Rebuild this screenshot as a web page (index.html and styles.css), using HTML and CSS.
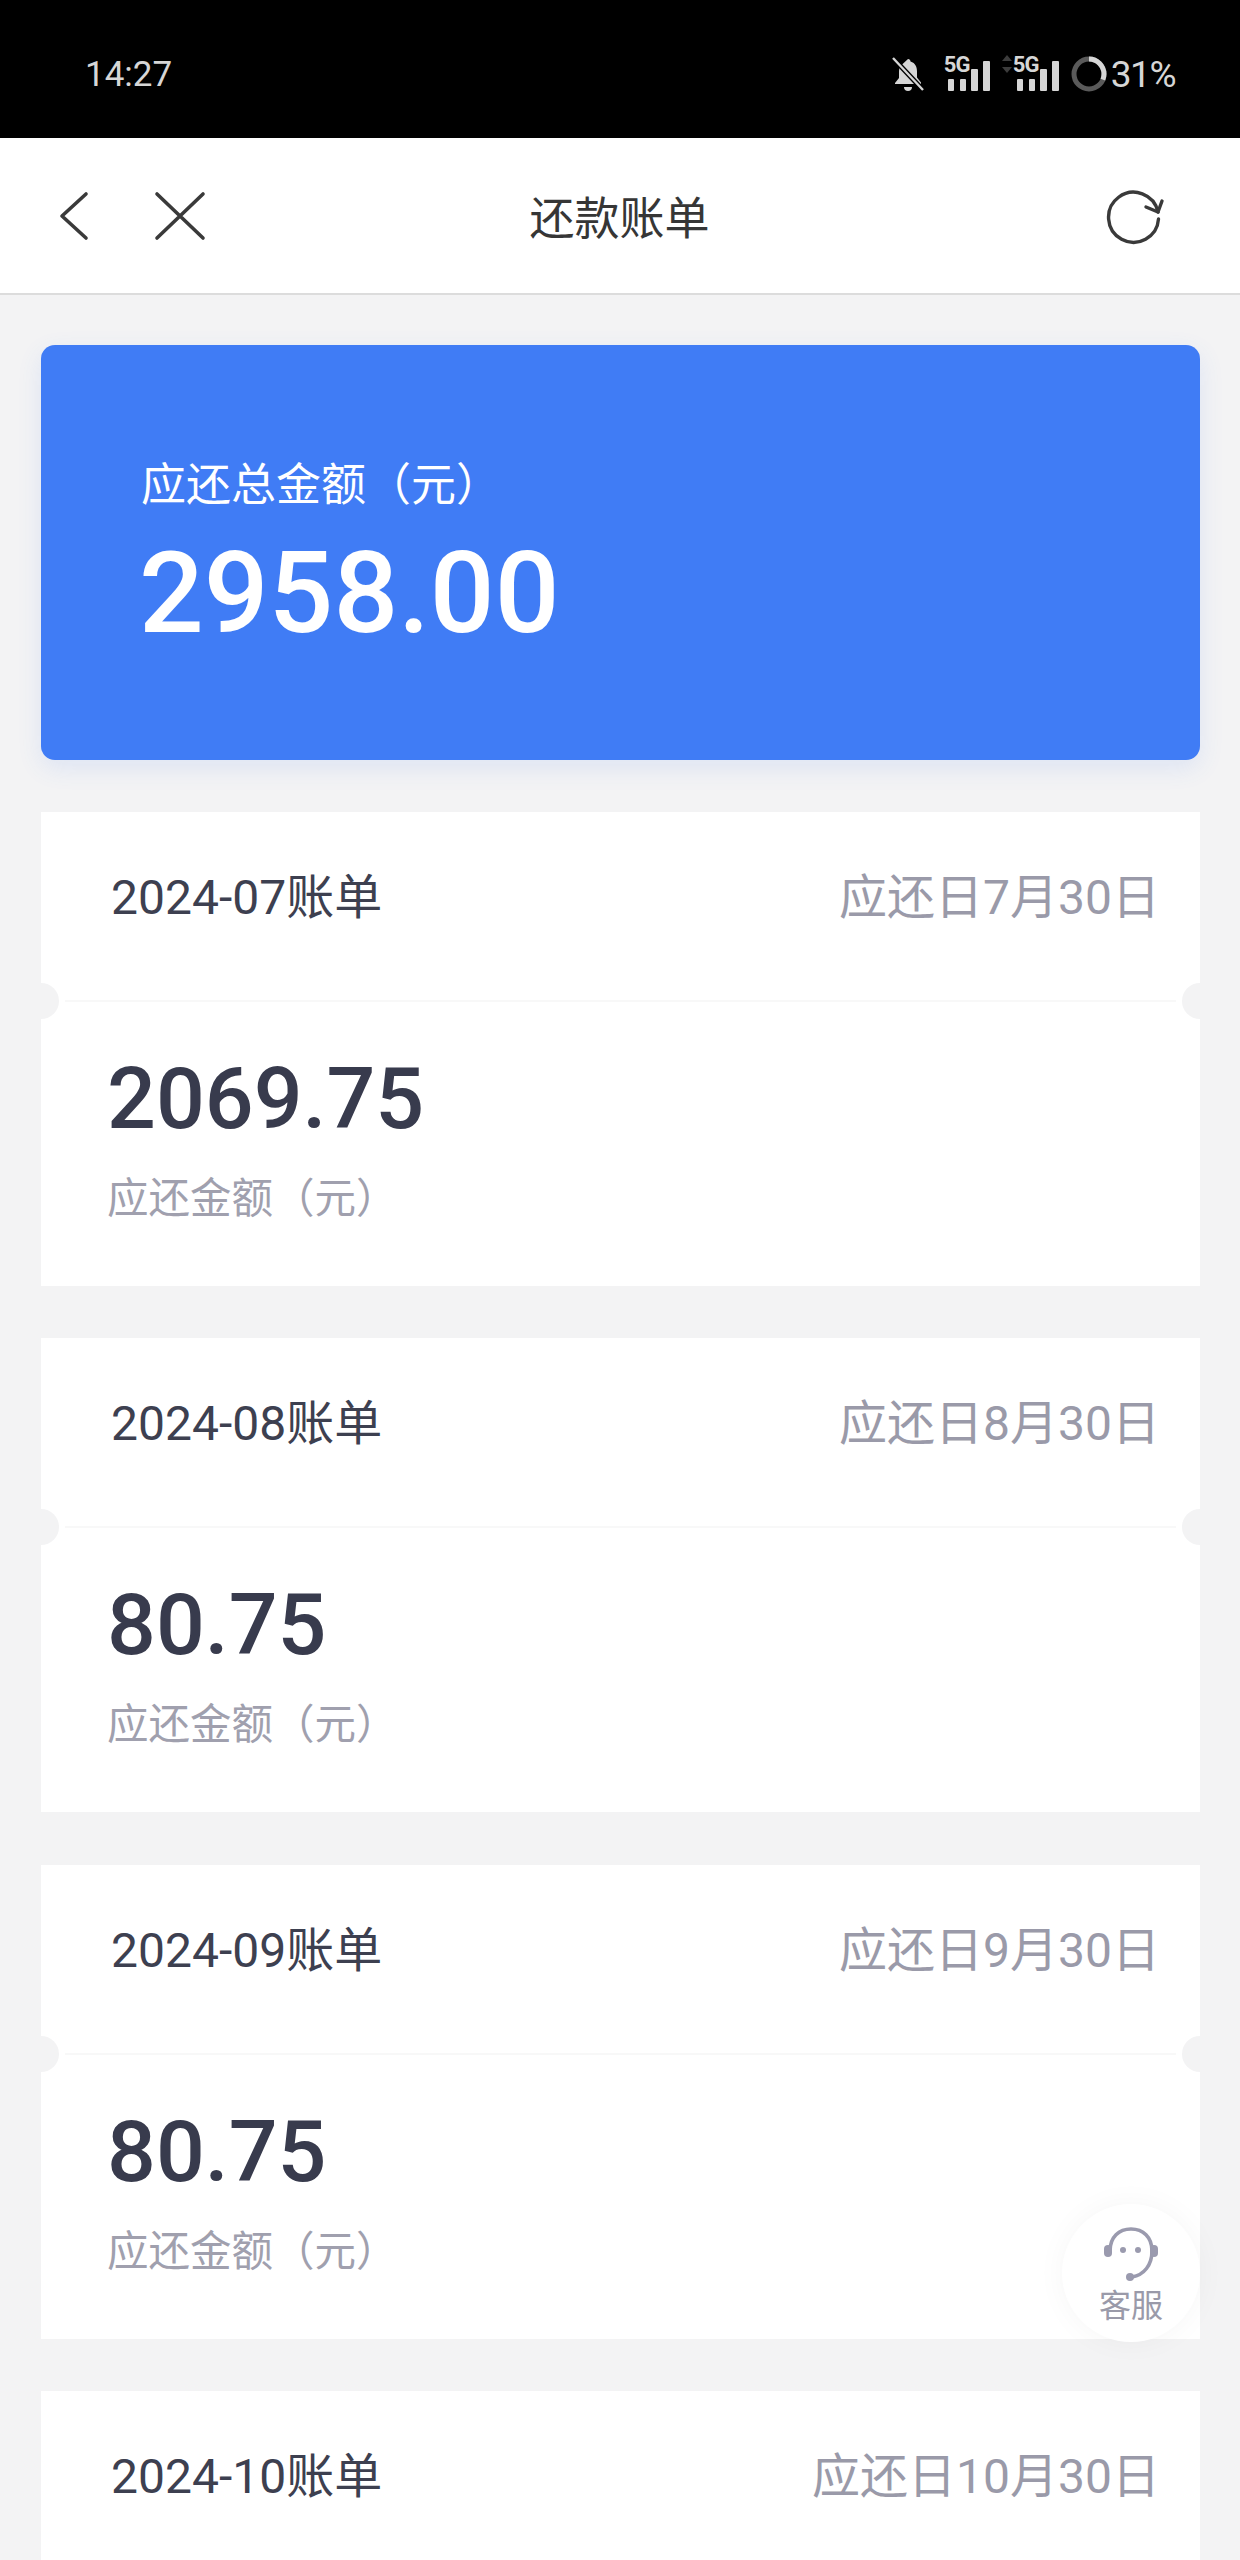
FILE: index.html
```html
<!DOCTYPE html>
<html lang="zh-CN">
<head>
    <meta charset="UTF-8">
    <meta name="viewport" content="width=device-width, initial-scale=1.0">
    <title>还款账单</title>
    <link rel="stylesheet" href="styles.css">
</head>
<body>
    <div class="status-bar">
        <span class="status-time">14:27</span>
        <div class="status-icons">
            <svg class="icon-bell" viewBox="0 0 34 36" width="34" height="36">
                <path d="M17 3c1.500 0 2.500 1 2.500 2.500 5 1.500 6.500 5.500 6.500 10v6l4 5v1.500H4V27l4-5v-6.500c0-2 .5-4 1.500-5.500z" fill="#d6d6d6"/>
                <path d="M13 31h8c0 2.500-1.500 4-4 4s-4-1.500-4-4z" fill="#d6d6d6"/>
                <path d="M2 2l30 32" stroke="#000" stroke-width="5"/>
                <path d="M2 2l30 32" stroke="#d6d6d6" stroke-width="2.400"/>
            </svg>
            <div class="signal">
                <span class="signal-text">5G</span>
                <i class="bar bar-low"></i>
                <i class="bar bar-low"></i>
                <i class="bar bar-mid"></i>
                <i class="bar bar-high"></i>
            </div>
            <svg class="icon-arrows" viewBox="0 0 12 20" width="12" height="20">
                <path d="M6 1l5 6H1z" fill="#3c3c3c"/>
                <path d="M6 19l5-6H1z" fill="#3c3c3c"/>
            </svg>
            <div class="signal">
                <span class="signal-text">5G</span>
                <i class="bar bar-low"></i>
                <i class="bar bar-low"></i>
                <i class="bar bar-mid"></i>
                <i class="bar bar-high"></i>
            </div>
            <svg class="icon-battery" viewBox="0 0 36 36" width="36" height="36">
                <circle cx="18" cy="18" r="15" fill="none" stroke="#5a5a5a" stroke-width="5"/>
                <circle cx="18" cy="18" r="15" fill="none" stroke="#d6d6d6" stroke-width="5" stroke-dasharray="29.200 94.200" transform="rotate(-90 18 18)"/>
            </svg>
            <span class="status-battery">31%</span>
        </div>
    </div>

    <div class="nav-bar">
        <svg class="nav-back" viewBox="0 0 30 50" width="30" height="50" fill="none" stroke="#3a3a3a" stroke-width="3.600" stroke-linecap="round" stroke-linejoin="round">
            <path d="M27 3L3 25l24 22"/>
        </svg>
        <svg class="nav-close" viewBox="0 0 52 50" width="52" height="50" fill="none" stroke="#3a3a3a" stroke-width="3.600" stroke-linecap="round">
            <path d="M3 3l46 44M49 3L3 47"/>
        </svg>
        <span class="nav-title">还款账单</span>
        <svg class="nav-refresh" viewBox="0 0 60 60" width="60" height="60" fill="none" stroke="#3a3a3a" stroke-width="3.400" stroke-linecap="round" stroke-linejoin="round">
            <path d="M53.500 34A25 25 0 1 1 53 27"/>
            <path d="M41 22l12 5 4-11"/>
        </svg>
    </div>

    <div class="content">
        <div class="total-card">
            <div class="total-label">应还总金额（元）</div>
            <div class="total-amount">2958.00</div>
        </div>

        <div class="bill-card">
            <div class="bill-head">
                <span class="bill-month">2024-07账单</span>
                <span class="bill-due">应还日7月30日</span>
            </div>
            <div class="bill-divider"></div>
            <div class="bill-body">
                <div class="bill-amount">2069.75</div>
                <div class="bill-label">应还金额（元）</div>
            </div>
        </div>

        <div class="bill-card">
            <div class="bill-head">
                <span class="bill-month">2024-08账单</span>
                <span class="bill-due">应还日8月30日</span>
            </div>
            <div class="bill-divider"></div>
            <div class="bill-body">
                <div class="bill-amount">80.75</div>
                <div class="bill-label">应还金额（元）</div>
            </div>
        </div>

        <div class="bill-card">
            <div class="bill-head">
                <span class="bill-month">2024-09账单</span>
                <span class="bill-due">应还日9月30日</span>
            </div>
            <div class="bill-divider"></div>
            <div class="bill-body">
                <div class="bill-amount">80.75</div>
                <div class="bill-label">应还金额（元）</div>
            </div>
        </div>

        <div class="bill-card">
            <div class="bill-head">
                <span class="bill-month">2024-10账单</span>
                <span class="bill-due">应还日10月30日</span>
            </div>
        </div>
    </div>

    <div class="service-btn">
        <svg viewBox="0 0 60 60" width="60" height="60">
            <path d="M9 28C9 14 18 6 30 6s21 8 21 22c0 14-8 24-20 26" fill="none" stroke="#9a9aae" stroke-width="3.600"/>
            <rect x="3" y="22" width="8" height="12" rx="4" fill="#9a9aae"/>
            <rect x="49" y="22" width="8" height="12" rx="4" fill="#9a9aae"/>
            <circle cx="22" cy="27" r="3" fill="#9a9aae"/>
            <circle cx="37" cy="27" r="3" fill="#9a9aae"/>
            <circle cx="29" cy="54" r="4" fill="#9a9aae"/>
        </svg>
        <span class="service-text">客服</span>
    </div>
</body>
</html>
```

FILE: styles.css
```css
* {
    box-sizing: border-box;
}

html, body {
    height: 2560px;
}

body {
    margin: 0;
    position: relative;
    overflow: hidden;
    background-color: #f3f3f4;
    font-family: 'Roboto', 'Noto Sans CJK SC', sans-serif;
    color: #383b4d;
}

.status-bar {
    height: 138px;
    background-color: #000;
    color: #d6d6d6;
    display: flex;
    align-items: center;
    justify-content: space-between;
    padding: 10px 65px 0 85px;
}

.status-time {
    font-size: 35px;
}

.status-icons {
    display: flex;
    align-items: center;
}

.status-battery {
    font-size: 37px;
    letter-spacing: -1.500px;
    margin-left: 4px;
}

.icon-bell {
    margin-right: 21px;
}

.signal {
    width: 46px;
    height: 42px;
    display: flex;
    align-items: flex-end;
    justify-content: space-between;
    padding: 0 2px 6px;
    position: relative;
    margin-top: 4px;
}

.bar {
    width: 6.500px;
    background-color: #d6d6d6;
    border-radius: 1px;
}

.bar-low {
    height: 12px;
}

.bar-mid {
    height: 22px;
}

.bar-high {
    height: 30px;
}

.signal-text {
    position: absolute;
    left: -2px;
    top: -2px;
    font-size: 22px;
    font-weight: 700;
    line-height: 24px;
    letter-spacing: -1px;
}

.icon-arrows {
    margin: 0 2px 0 9px;
    position: relative;
    top: -10px;
}

.icon-battery {
    margin-left: 10px;
}

.nav-bar {
    height: 157px;
    background-color: #fff;
    border-bottom: 2px solid #dcdcdc;
    display: flex;
    align-items: center;
    position: relative;
    padding: 0 75px 0 59px;
}

.nav-close {
    margin-left: 65px;
}

.nav-title {
    flex: 1;
    text-align: center;
    font-size: 45px;
    color: #363636;
    padding-right: 72px;
}

.nav-refresh {
    margin-top: -2px;
}

.content {
    padding: 50px 40px 0 41px;
    display: flex;
    flex-direction: column;
    gap: 52.500px;
}

.total-card {
    height: 415px;
    background-color: #407cf5;
    border-radius: 14px;
    box-shadow: 0 8px 24px rgba(64, 124, 245, 0.12);
    color: #fff;
    padding: 109px 0 0 100px;
    margin-bottom: -1px;
}

.total-label {
    font-size: 45px;
    line-height: 64px;
}

.total-amount {
    font-size: 114px;
    font-weight: 500;
    line-height: 130px;
    margin: 10px 0 0 -2px;
}

.bill-card {
    background-color: #fff;
    flex-shrink: 0;
}

.bill-head {
    height: 188px;
    display: flex;
    align-items: center;
    justify-content: space-between;
    padding: 0 40px 26px 70px;
}

.bill-month {
    font-size: 48px;
    color: #3d4050;
}

.bill-due {
    font-size: 48px;
    color: #9a9aa9;
}

.bill-divider {
    height: 2px;
    margin: 0 24px;
    background-color: #f8f8f8;
    position: relative;
}

.bill-divider::before,
.bill-divider::after {
    content: "";
    position: absolute;
    top: -17px;
    width: 18px;
    height: 36px;
    background-color: #f3f3f4;
}

.bill-divider::before {
    left: -24px;
    border-radius: 0 18px 18px 0;
}

.bill-divider::after {
    right: -24px;
    border-radius: 18px 0 0 18px;
}

.bill-body {
    height: 284px;
    padding: 47px 0 0 66px;
}

.bill-amount {
    font-size: 86px;
    font-weight: 500;
    line-height: 100px;
}

.bill-label {
    font-size: 41.500px;
    line-height: 50px;
    margin-top: 25px;
    color: #a0a0ae;
}

.service-btn {
    position: absolute;
    left: 1062px;
    top: 2204px;
    width: 138px;
    height: 138px;
    border-radius: 50%;
    background-color: #fff;
    box-shadow: 0 0 30px rgba(0, 0, 0, 0.04);
    display: flex;
    flex-direction: column;
    align-items: center;
    padding-top: 19px;
    color: #9a9aa9;
}

.service-text {
    font-size: 32px;
    line-height: 40px;
    margin-top: 3px;
}
```
